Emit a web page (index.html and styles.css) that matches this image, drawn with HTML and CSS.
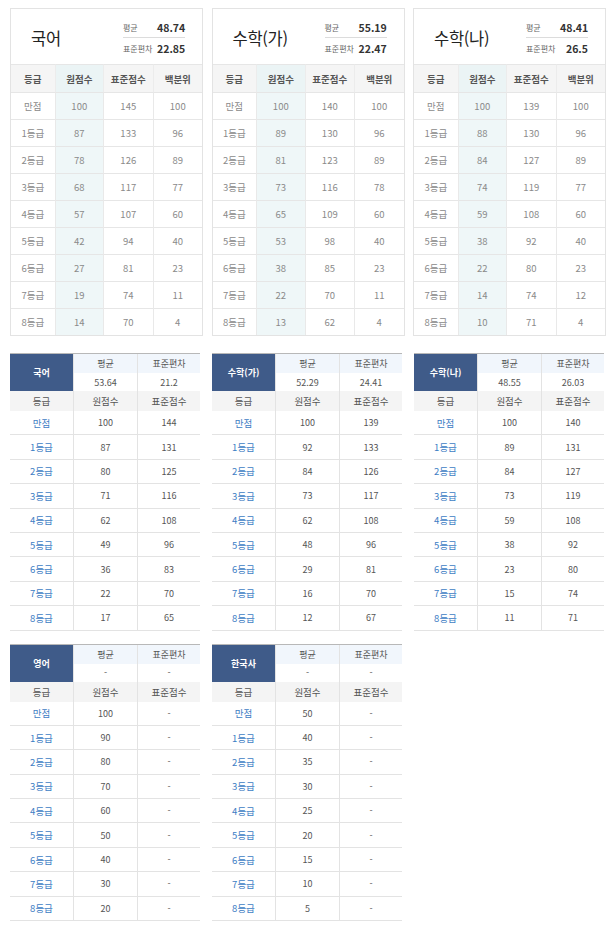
FILE: index.html
```html
<!DOCTYPE html>
<html lang="ko">
<head>
<meta charset="utf-8">
<link rel="stylesheet" href="styles.css">
</head>
<body>
<div class="page">
  <section class="cards">
    <div class="card">
      <div class="card-head">
        <div class="title">국어</div>
        <div class="stats">
          <span class="lbl">평균</span><span class="val">48.74</span>
          <span class="lbl">표준편차</span><span class="val">22.85</span>
        </div>
      </div>
      <div class="grid4">
        <div class="h">등급</div><div class="h raw">원점수</div><div class="h">표준점수</div><div class="h">백분위</div>
        <div>만점</div><div class="raw">100</div><div>145</div><div>100</div>
        <div>1등급</div><div class="raw">87</div><div>133</div><div>96</div>
        <div>2등급</div><div class="raw">78</div><div>126</div><div>89</div>
        <div>3등급</div><div class="raw">68</div><div>117</div><div>77</div>
        <div>4등급</div><div class="raw">57</div><div>107</div><div>60</div>
        <div>5등급</div><div class="raw">42</div><div>94</div><div>40</div>
        <div>6등급</div><div class="raw">27</div><div>81</div><div>23</div>
        <div>7등급</div><div class="raw">19</div><div>74</div><div>11</div>
        <div>8등급</div><div class="raw">14</div><div>70</div><div>4</div>
      </div>
    </div>
    <div class="card">
      <div class="card-head">
        <div class="title">수학(가)</div>
        <div class="stats">
          <span class="lbl">평균</span><span class="val">55.19</span>
          <span class="lbl">표준편차</span><span class="val">22.47</span>
        </div>
      </div>
      <div class="grid4">
        <div class="h">등급</div><div class="h raw">원점수</div><div class="h">표준점수</div><div class="h">백분위</div>
        <div>만점</div><div class="raw">100</div><div>140</div><div>100</div>
        <div>1등급</div><div class="raw">89</div><div>130</div><div>96</div>
        <div>2등급</div><div class="raw">81</div><div>123</div><div>89</div>
        <div>3등급</div><div class="raw">73</div><div>116</div><div>78</div>
        <div>4등급</div><div class="raw">65</div><div>109</div><div>60</div>
        <div>5등급</div><div class="raw">53</div><div>98</div><div>40</div>
        <div>6등급</div><div class="raw">38</div><div>85</div><div>23</div>
        <div>7등급</div><div class="raw">22</div><div>70</div><div>11</div>
        <div>8등급</div><div class="raw">13</div><div>62</div><div>4</div>
      </div>
    </div>
    <div class="card">
      <div class="card-head">
        <div class="title">수학(나)</div>
        <div class="stats">
          <span class="lbl">평균</span><span class="val">48.41</span>
          <span class="lbl">표준편차</span><span class="val">26.5</span>
        </div>
      </div>
      <div class="grid4">
        <div class="h">등급</div><div class="h raw">원점수</div><div class="h">표준점수</div><div class="h">백분위</div>
        <div>만점</div><div class="raw">100</div><div>139</div><div>100</div>
        <div>1등급</div><div class="raw">88</div><div>130</div><div>96</div>
        <div>2등급</div><div class="raw">84</div><div>127</div><div>89</div>
        <div>3등급</div><div class="raw">74</div><div>119</div><div>77</div>
        <div>4등급</div><div class="raw">59</div><div>108</div><div>60</div>
        <div>5등급</div><div class="raw">38</div><div>92</div><div>40</div>
        <div>6등급</div><div class="raw">22</div><div>80</div><div>23</div>
        <div>7등급</div><div class="raw">14</div><div>74</div><div>12</div>
        <div>8등급</div><div class="raw">10</div><div>71</div><div>4</div>
      </div>
    </div>
  </section>

  <section class="tables">
    <div class="st">
      <div class="subj">국어</div><div class="sh">평균</div><div class="sh">표준편차</div>
      <div class="sv">53.64</div><div class="sv">21.2</div>
      <div class="gh">등급</div><div class="gh">원점수</div><div class="gh">표준점수</div>
      <div class="g">만점</div><div>100</div><div>144</div>
      <div class="g">1등급</div><div>87</div><div>131</div>
      <div class="g">2등급</div><div>80</div><div>125</div>
      <div class="g">3등급</div><div>71</div><div>116</div>
      <div class="g">4등급</div><div>62</div><div>108</div>
      <div class="g">5등급</div><div>49</div><div>96</div>
      <div class="g">6등급</div><div>36</div><div>83</div>
      <div class="g">7등급</div><div>22</div><div>70</div>
      <div class="g">8등급</div><div>17</div><div>65</div>
    </div>
    <div class="st">
      <div class="subj">수학(가)</div><div class="sh">평균</div><div class="sh">표준편차</div>
      <div class="sv">52.29</div><div class="sv">24.41</div>
      <div class="gh">등급</div><div class="gh">원점수</div><div class="gh">표준점수</div>
      <div class="g">만점</div><div>100</div><div>139</div>
      <div class="g">1등급</div><div>92</div><div>133</div>
      <div class="g">2등급</div><div>84</div><div>126</div>
      <div class="g">3등급</div><div>73</div><div>117</div>
      <div class="g">4등급</div><div>62</div><div>108</div>
      <div class="g">5등급</div><div>48</div><div>96</div>
      <div class="g">6등급</div><div>29</div><div>81</div>
      <div class="g">7등급</div><div>16</div><div>70</div>
      <div class="g">8등급</div><div>12</div><div>67</div>
    </div>
    <div class="st">
      <div class="subj">수학(나)</div><div class="sh">평균</div><div class="sh">표준편차</div>
      <div class="sv">48.55</div><div class="sv">26.03</div>
      <div class="gh">등급</div><div class="gh">원점수</div><div class="gh">표준점수</div>
      <div class="g">만점</div><div>100</div><div>140</div>
      <div class="g">1등급</div><div>89</div><div>131</div>
      <div class="g">2등급</div><div>84</div><div>127</div>
      <div class="g">3등급</div><div>73</div><div>119</div>
      <div class="g">4등급</div><div>59</div><div>108</div>
      <div class="g">5등급</div><div>38</div><div>92</div>
      <div class="g">6등급</div><div>23</div><div>80</div>
      <div class="g">7등급</div><div>15</div><div>74</div>
      <div class="g">8등급</div><div>11</div><div>71</div>
    </div>
  </section>

  <section class="tables second">
    <div class="st">
      <div class="subj">영어</div><div class="sh">평균</div><div class="sh">표준편차</div>
      <div class="sv">-</div><div class="sv">-</div>
      <div class="gh">등급</div><div class="gh">원점수</div><div class="gh">표준점수</div>
      <div class="g">만점</div><div>100</div><div>-</div>
      <div class="g">1등급</div><div>90</div><div>-</div>
      <div class="g">2등급</div><div>80</div><div>-</div>
      <div class="g">3등급</div><div>70</div><div>-</div>
      <div class="g">4등급</div><div>60</div><div>-</div>
      <div class="g">5등급</div><div>50</div><div>-</div>
      <div class="g">6등급</div><div>40</div><div>-</div>
      <div class="g">7등급</div><div>30</div><div>-</div>
      <div class="g">8등급</div><div>20</div><div>-</div>
    </div>
    <div class="st">
      <div class="subj">한국사</div><div class="sh">평균</div><div class="sh">표준편차</div>
      <div class="sv">-</div><div class="sv">-</div>
      <div class="gh">등급</div><div class="gh">원점수</div><div class="gh">표준점수</div>
      <div class="g">만점</div><div>50</div><div>-</div>
      <div class="g">1등급</div><div>40</div><div>-</div>
      <div class="g">2등급</div><div>35</div><div>-</div>
      <div class="g">3등급</div><div>30</div><div>-</div>
      <div class="g">4등급</div><div>25</div><div>-</div>
      <div class="g">5등급</div><div>20</div><div>-</div>
      <div class="g">6등급</div><div>15</div><div>-</div>
      <div class="g">7등급</div><div>10</div><div>-</div>
      <div class="g">8등급</div><div>5</div><div>-</div>
    </div>
  </section>
</div>
</body>
</html>
```
FILE: styles.css
```css
* { box-sizing: border-box; }
html, body { margin: 0; padding: 0; background: #fff; }
body {
  font-family: "Noto Sans CJK KR", "Noto Sans", sans-serif;
  color: #555;
}
.page { padding: 8px 6px 0 10px; }

/* top cards */
.cards {
  display: grid;
  grid-template-columns: repeat(3, 193px);
  column-gap: 8.5px;
}
.card {
  border: 1px solid #e3e3e3;
  height: 328px;
  display: flex;
  flex-direction: column;
}
.card-head {
  height: 56px;
  display: flex;
  align-items: center;
  justify-content: space-between;
  padding: 3px 17px 0 20px;
}
.title {
  font-size: 16.5px;
  color: #222;
  line-height: 1;
  letter-spacing: -0.3px;
}
.stats {
  display: grid;
  grid-template-columns: 34px 28px;
  grid-template-rows: 20px 20px;
  align-items: center;
}
.stats .lbl { font-size: 8px; color: #666; }
.stats .val { font-size: 10.5px; font-weight: 700; color: #333; text-align: right; white-space: nowrap; }
.stats .lbl:nth-child(1), .stats .val:nth-child(2) {
  border-bottom: 1px solid #dcdcdc;
  height: 20px;
  line-height: 19px;
}
.grid4 {
  display: grid;
  grid-template-columns: 44fr 49fr 50fr 50fr;
  grid-template-rows: 28px repeat(9, 27px);
  font-size: 9.5px;
  color: #8a8a8a;
}
.grid4 > div {
  display: flex;
  align-items: center;
  justify-content: center;
  border-top: 1px solid #e6e6e6;
  border-left: 1px solid #e9e9e9;
}
.grid4 > div:nth-child(4n+1) { border-left: none; }
.grid4 > .h {
  background: #f5f5f5;
  color: #555;
  font-weight: 700;
  font-size: 9.5px;
  border-left-color: #ececec;
}
.grid4 > .raw { background: #eff7f8; }
.grid4 > .h.raw { background: #ebf4f5; }

/* blue-header tables */
.tables {
  display: grid;
  grid-template-columns: repeat(3, 190px);
  column-gap: 12px;
  margin-top: 17px;
}
.tables.second { margin-top: 13px; }
.st {
  display: grid;
  grid-template-columns: 63px 64px 63px;
  grid-template-rows: 19px 18px 20px repeat(9, 24.4px);
  border-top: 1px solid #b8b8b8;
  font-size: 9px;
  color: #555;
}
.st > div {
  display: flex;
  align-items: center;
  justify-content: center;
  border-bottom: 1px solid #e3e3e3;
  border-left: 1px solid #e3e3e3;
}
.st > .subj {
  grid-row: span 2;
  background: #3f5b89;
  color: #fff;
  font-weight: 700;
  border-left: none;
  border-bottom: none;
}
.st > .sh { background: #f1f6fc; border-bottom: none; }
.st > .sv { background: #fff; border-bottom: none; }
.st > .gh { background: #f4f4f4; border-bottom: none; font-size: 9.5px; }
.st > .gh:nth-child(6) { border-left: none; }
.st > .g { border-left: none; color: #3d7dc4; font-size: 9.5px; }
```
